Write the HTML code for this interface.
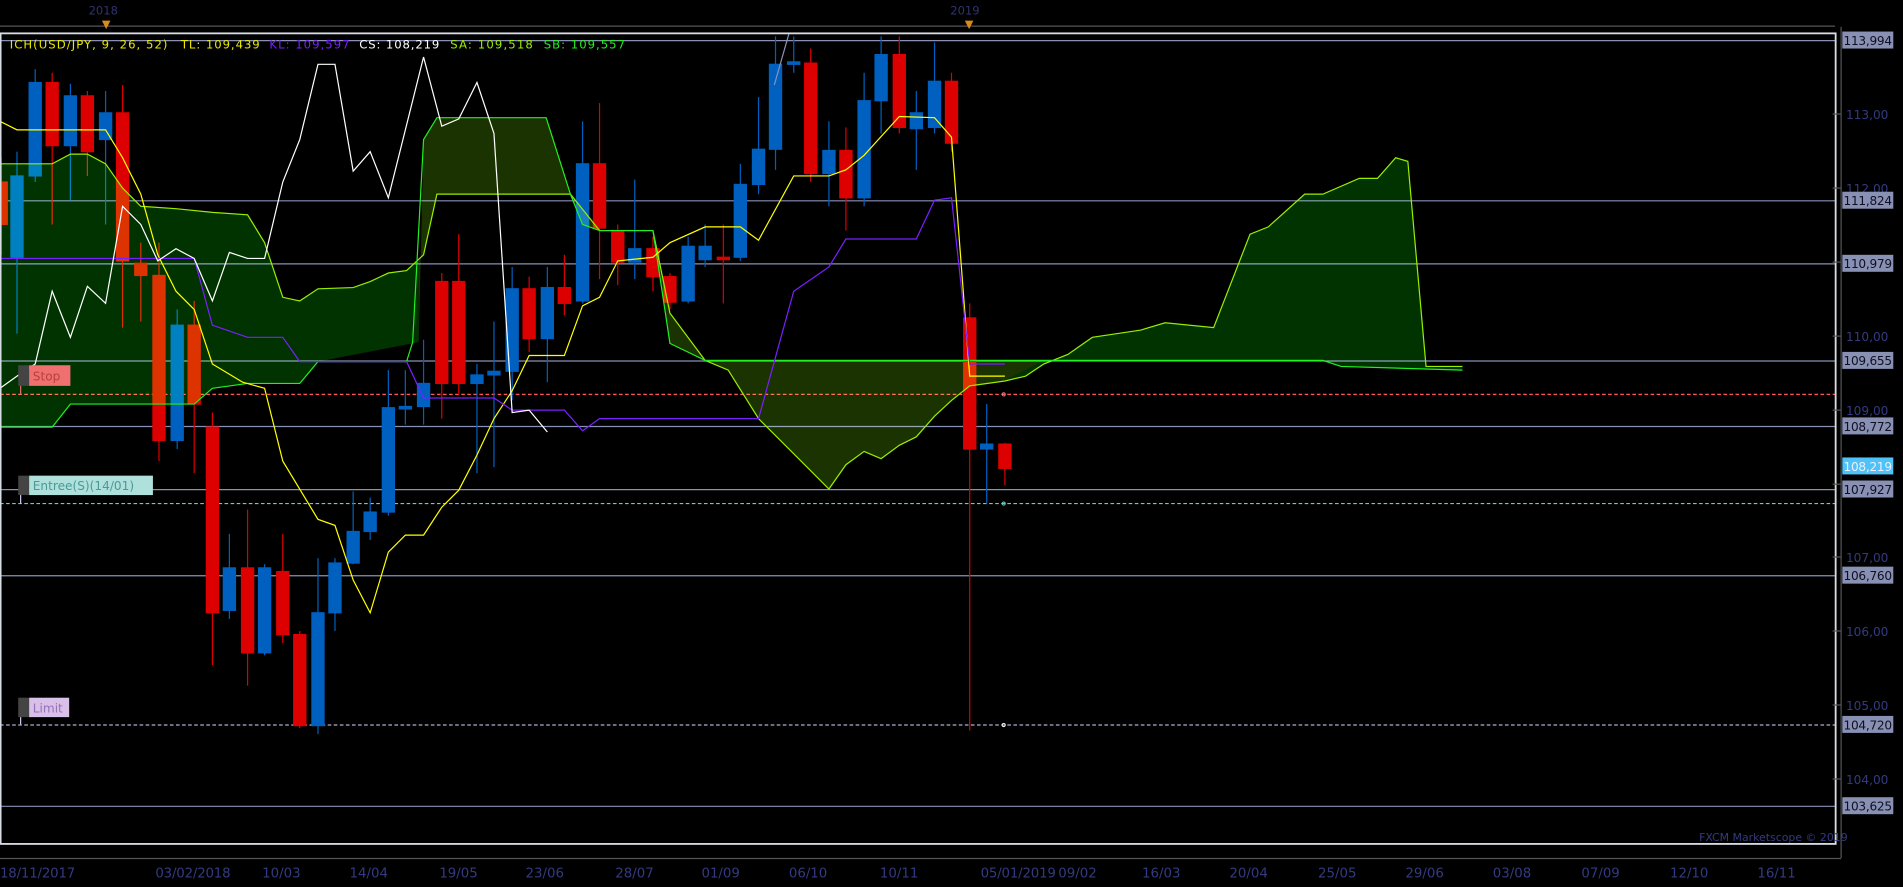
<!DOCTYPE html>
<html><head><meta charset="utf-8"><style>
html,body{margin:0;padding:0;background:#000;overflow:hidden}
svg{display:block}
text{font-family:"DejaVu Sans","Liberation Sans",sans-serif}
</style></head><body>
<svg width="1903" height="887" viewBox="0 0 1568 731" preserveAspectRatio="none" xmlns="http://www.w3.org/2000/svg">
<rect width="1568" height="731" fill="#000"/>
<line x1="0" y1="21.5" x2="1512" y2="21.5" stroke="#555" stroke-width="1"/>
<text x="73" y="12" fill="#2e3370" font-size="9.5">2018</text>
<text x="783" y="12" fill="#2e3370" font-size="9.5">2019</text>
<polygon points="84,17 91,17 87.5,24" fill="#d98a1a"/>
<polygon points="795,17 802,17 798.5,24" fill="#d98a1a"/>

<g stroke="#8890b4" stroke-width="1">
<line x1="0" y1="33.5" x2="1512" y2="33.5"/>
<line x1="0" y1="165.5" x2="1512" y2="165.5"/>
<line x1="0" y1="217.5" x2="1512" y2="217.5"/>
<line x1="0" y1="297.5" x2="1512" y2="297.5"/>
<line x1="0" y1="351.5" x2="1512" y2="351.5"/>
<line x1="0" y1="403.5" x2="1512" y2="403.5"/>
<line x1="0" y1="474.5" x2="1512" y2="474.5"/>
<line x1="0" y1="664.5" x2="1512" y2="664.5"/>
</g>
<line x1="0" y1="597.5" x2="1512" y2="597.5" stroke="#b8a8d0" stroke-width="1" stroke-dasharray="3,2"/>
<line x1="0" y1="325" x2="1512" y2="325" stroke="#ff5555" stroke-width="1" stroke-dasharray="3,2"/>
<line x1="0" y1="415" x2="1512" y2="415" stroke="#66cccc" stroke-width="1" stroke-dasharray="3,2"/>

<g stroke-width="1">
<g fill="#dd0000" stroke="#dd0000">
<line x1="1" y1="130" x2="1" y2="210"/><rect x="-4" y="150" width="10" height="35"/>
<line x1="43" y1="60" x2="43" y2="185"/><rect x="38" y="68" width="10" height="52"/>
<line x1="72" y1="75" x2="72" y2="145"/><rect x="67" y="79" width="10" height="46"/>
<line x1="101" y1="70" x2="101" y2="270"/><rect x="96" y="93" width="10" height="122"/>
<line x1="116" y1="200" x2="116" y2="265"/><rect x="111" y="217" width="10" height="10"/>
<line x1="131" y1="200" x2="131" y2="380"/><rect x="126" y="227" width="10" height="136"/>
<line x1="160" y1="248" x2="160" y2="390"/><rect x="155" y="268" width="10" height="65"/>
<line x1="175" y1="340" x2="175" y2="548"/><rect x="170" y="352" width="10" height="153"/>
<line x1="204" y1="420" x2="204" y2="565"/><rect x="199" y="468" width="10" height="70"/>
<line x1="233" y1="440" x2="233" y2="530"/><rect x="228" y="471" width="10" height="52"/>
<line x1="247" y1="520" x2="247" y2="600"/><rect x="242" y="523" width="10" height="75"/>
<line x1="364" y1="225" x2="364" y2="345"/><rect x="359" y="232" width="10" height="84"/>
<line x1="378" y1="193" x2="378" y2="325"/><rect x="373" y="232" width="10" height="84"/>
<line x1="436" y1="228" x2="436" y2="290"/><rect x="431" y="238" width="10" height="41"/>
<line x1="465" y1="210" x2="465" y2="260"/><rect x="460" y="237" width="10" height="13"/>
<line x1="494" y1="85" x2="494" y2="230"/><rect x="489" y="135" width="10" height="53"/>
<line x1="509" y1="185" x2="509" y2="235"/><rect x="504" y="190" width="10" height="26"/>
<line x1="538" y1="195" x2="538" y2="240"/><rect x="533" y="205" width="10" height="23"/>
<line x1="552" y1="225" x2="552" y2="255"/><rect x="547" y="228" width="10" height="21"/>
<line x1="596" y1="185" x2="596" y2="250"/><rect x="591" y="212" width="10" height="2"/>
<line x1="668" y1="40" x2="668" y2="150"/><rect x="663" y="52" width="10" height="91"/>
<line x1="697" y1="105" x2="697" y2="190"/><rect x="692" y="124" width="10" height="39"/>
<line x1="741" y1="30" x2="741" y2="110"/><rect x="736" y="45" width="10" height="60"/>
<line x1="784" y1="60" x2="784" y2="125"/><rect x="779" y="67" width="10" height="51"/>
<line x1="799" y1="250" x2="799" y2="602"/><rect x="794" y="262" width="10" height="108"/>
<line x1="828" y1="365" x2="828" y2="400"/><rect x="823" y="366" width="10" height="20"/>
</g>
<g fill="#0060c0" stroke="#0060c0">
<line x1="14" y1="125" x2="14" y2="275"/><rect x="9" y="145" width="10" height="67"/>
<line x1="29" y1="57" x2="29" y2="150"/><rect x="24" y="68" width="10" height="77"/>
<line x1="58" y1="69" x2="58" y2="165"/><rect x="53" y="79" width="10" height="41"/>
<line x1="87" y1="75" x2="87" y2="185"/><rect x="82" y="93" width="10" height="22"/>
<line x1="146" y1="255" x2="146" y2="370"/><rect x="141" y="268" width="10" height="95"/>
<line x1="189" y1="440" x2="189" y2="510"/><rect x="184" y="468" width="10" height="35"/>
<line x1="218" y1="465" x2="218" y2="540"/><rect x="213" y="468" width="10" height="70"/>
<line x1="262" y1="460" x2="262" y2="605"/><rect x="257" y="505" width="10" height="93"/>
<line x1="276" y1="460" x2="276" y2="520"/><rect x="271" y="464" width="10" height="41"/>
<line x1="291" y1="405" x2="291" y2="465"/><rect x="286" y="438" width="10" height="26"/>
<line x1="305" y1="410" x2="305" y2="445"/><rect x="300" y="422" width="10" height="16"/>
<line x1="320" y1="305" x2="320" y2="425"/><rect x="315" y="336" width="10" height="86"/>
<line x1="334" y1="305" x2="334" y2="350"/><rect x="329" y="335" width="10" height="2"/>
<line x1="349" y1="280" x2="349" y2="350"/><rect x="344" y="316" width="10" height="19"/>
<line x1="393" y1="300" x2="393" y2="390"/><rect x="388" y="309" width="10" height="7"/>
<line x1="407" y1="265" x2="407" y2="385"/><rect x="402" y="306" width="10" height="3"/>
<line x1="422" y1="220" x2="422" y2="330"/><rect x="417" y="238" width="10" height="68"/>
<line x1="451" y1="220" x2="451" y2="315"/><rect x="446" y="237" width="10" height="42"/>
<line x1="480" y1="100" x2="480" y2="250"/><rect x="475" y="135" width="10" height="113"/>
<line x1="523" y1="148" x2="523" y2="230"/><rect x="518" y="205" width="10" height="11"/>
<line x1="567" y1="195" x2="567" y2="250"/><rect x="562" y="203" width="10" height="45"/>
<line x1="581" y1="185" x2="581" y2="220"/><rect x="576" y="203" width="10" height="11"/>
<line x1="610" y1="135" x2="610" y2="215"/><rect x="605" y="152" width="10" height="60"/>
<line x1="625" y1="80" x2="625" y2="160"/><rect x="620" y="123" width="10" height="29"/>
<line x1="639" y1="30" x2="639" y2="140"/><rect x="634" y="53" width="10" height="70"/>
<line x1="654" y1="30" x2="654" y2="60"/><rect x="649" y="51" width="10" height="2"/>
<line x1="683" y1="100" x2="683" y2="170"/><rect x="678" y="124" width="10" height="19"/>
<line x1="712" y1="60" x2="712" y2="170"/><rect x="707" y="83" width="10" height="80"/>
<line x1="726" y1="30" x2="726" y2="110"/><rect x="721" y="45" width="10" height="38"/>
<line x1="755" y1="75" x2="755" y2="140"/><rect x="750" y="93" width="10" height="13"/>
<line x1="770" y1="35" x2="770" y2="110"/><rect x="765" y="67" width="10" height="38"/>
<line x1="813" y1="333" x2="813" y2="415"/><rect x="808" y="366" width="10" height="4"/>
</g>
</g>

<g style="mix-blend-mode:screen">
<polygon fill="#003300" points="0,135 43,135 58,127 72,127 87,135 101,155 116,170 145,172 175,175 204,177 218,200 233,245 247,248 262,238 291,237 305,232 320,225 335,223 345,215 345,282 262,298 247,316 204,316 175,320 160,333 58,333 43,352 0,352"/>
<polygon fill="#1a3300" points="345,282 349,115 360,97 450,97 470,160 480,185 494,190 538,190 552,283 581,297 600,297 600,305 581,297 552,258 538,190 494,190 470,160 378,160 360,160 349,210 345,215"/>
<polygon fill="#1a3300" points="581,297 600,305 625,345 640,360 660,380 683,403 697,383 712,372 726,378 741,367 755,360 770,343 784,330 799,318 828,314 860,297"/>
<polygon fill="#003300" points="828,314 845,310 860,300 880,292 900,278 940,272 960,266 1000,270 1030,193 1045,187 1075,160 1090,160 1120,147 1135,147 1150,130 1160,133 1175,302 1205,302 1205,305 1105,302 1090,297 860,297"/>
</g>

<g fill="none" stroke-width="1">
<polyline stroke="#99ee00" points="0,135 43,135 58,127 72,127 87,135 101,155 116,170 145,172 175,175 204,177 218,200 233,245 247,248 262,238 291,237 305,232 320,225 335,223 349,210 360,160 470,160 494,190 538,190 552,258 581,297 600,305 625,345 640,360 660,380 683,403 697,383 712,372 726,378 741,367 755,360 770,343 784,330 799,318 828,314 845,310 860,300 880,292 900,278 940,272 960,266 1000,270 1030,193 1045,187 1075,160 1090,160 1120,147 1135,147 1150,130 1160,133 1175,302 1205,302"/>
<polyline stroke="#22ee22" points="0,352 43,352 58,333 160,333 175,320 204,316 247,316 262,298 335,298 340,282 349,115 360,97 450,97 470,160 480,185 494,190 538,190 552,283 581,297 1090,297 1105,302 1205,305"/>
<polyline stroke="#ffff00" points="0,100 14,107 87,107 101,130 116,160 130,210 145,240 160,255 175,300 200,315 218,320 233,380 262,428 276,433 291,478 305,505 320,455 334,441 349,441 364,418 378,404 393,375 407,345 422,322 436,293 465,293 480,252 494,245 509,215 538,212 552,200 581,187 610,187 625,198 654,145 683,145 697,140 712,128 741,96 770,97 784,113 799,310 828,310"/>
<polyline stroke="#7a1fff" points="0,213 160,213 175,268 204,278 233,278 247,298 335,298 349,328 407,328 422,338 465,338 480,355 494,345 625,345 654,240 683,220 697,197 755,197 770,165 784,163 799,300 828,300"/>
<polyline stroke="#ffffff" points="0,320 14,310 29,300 43,240 58,278 72,236 87,250 101,170 116,185 130,215 145,205 160,213 175,248 189,208 204,213 218,213 233,150 247,115 262,53 276,53 291,141 305,125 320,163 349,47 364,104 378,98 393,68 407,110 422,340 436,338 451,356"/>
<polyline stroke="#8890b4" points="638,70 650,28"/>
</g>

<g font-size="10">
<rect x="15" y="301" width="9" height="17" fill="#444"/><rect x="24" y="301" width="34" height="17" fill="#f07070"/>
<text x="27" y="313.5" fill="#b84040">Stop</text>
<path d="M17,318 V325" stroke="#e07070" fill="none"/>
<rect x="15" y="392" width="9" height="16" fill="#444"/><rect x="24" y="392" width="102" height="16" fill="#b0e0dc"/>
<text x="27" y="404" fill="#4a9a9a">Entree(S)(14/01)</text>
<path d="M17,408 V415" stroke="#cce" fill="none"/>
<rect x="15" y="575" width="9" height="16" fill="#444"/><rect x="24" y="575" width="33" height="16" fill="#d8c0e8"/>
<text x="27" y="587" fill="#9a70b8">Limit</text>
<path d="M17,591 V597" stroke="#cce" fill="none"/>
</g>
<g fill="none" stroke="#fff" stroke-width="0.8"><circle cx="827" cy="325" r="1.3" stroke="#f77"/><circle cx="827" cy="415" r="1.3" stroke="#7cc"/><circle cx="827" cy="597.5" r="1.3"/></g>

<g font-size="9.6">
<text x="8" y="40" fill="#e8e800" textLength="130">ICH(USD/JPY, 9, 26, 52)</text>
<text x="149" y="40" fill="#e8e800" textLength="65">TL: 109,439</text>
<text x="222" y="40" fill="#7a1fff" textLength="66">KL: 109,597</text>
<text x="296" y="40" fill="#ffffff" textLength="66">CS: 108,219</text>
<text x="371" y="40" fill="#99ee00" textLength="68">SA: 109,518</text>
<text x="448" y="40" fill="#22ee22" textLength="67">SB: 109,557</text>
</g>

<rect x="0.5" y="27.5" width="1512" height="668" fill="none" stroke="#d8dce4" stroke-width="1.5"/>
<text x="1400" y="693" fill="#333a80" font-size="9">FXCM Marketscope © 2019</text>

<line x1="1517" y1="22" x2="1517" y2="707" stroke="#555"/>
<g stroke="#555">
<line x1="1510" y1="94" x2="1517" y2="94"/><line x1="1510" y1="155" x2="1517" y2="155"/><line x1="1510" y1="216" x2="1517" y2="216"/><line x1="1510" y1="277" x2="1517" y2="277"/><line x1="1510" y1="338" x2="1517" y2="338"/><line x1="1510" y1="399" x2="1517" y2="399"/><line x1="1510" y1="459" x2="1517" y2="459"/><line x1="1510" y1="520" x2="1517" y2="520"/><line x1="1510" y1="581" x2="1517" y2="581"/><line x1="1510" y1="642" x2="1517" y2="642"/>
</g>
<g font-size="10" fill="#333a80">
<text x="1521" y="98">113,00</text>
<text x="1521" y="159">112,00</text>
<text x="1521" y="281">110,00</text>
<text x="1521" y="342">109,00</text>
<text x="1521" y="463">107,00</text>
<text x="1521" y="524">106,00</text>
<text x="1521" y="585">105,00</text>
<text x="1521" y="646">104,00</text>
</g>
<g font-size="10">
<rect x="1518" y="26" width="42" height="14" fill="#8890b4"/><text x="1519" y="37" fill="#101020" textLength="40">113,994</text>
<rect x="1518" y="158" width="42" height="14" fill="#8890b4"/><text x="1519" y="169" fill="#101020" textLength="40">111,824</text>
<rect x="1518" y="210" width="42" height="14" fill="#8890b4"/><text x="1519" y="221" fill="#101020" textLength="40">110,979</text>
<rect x="1518" y="290" width="42" height="14" fill="#8890b4"/><text x="1519" y="301" fill="#101020" textLength="40">109,655</text>
<rect x="1518" y="344" width="42" height="14" fill="#8890b4"/><text x="1519" y="355" fill="#101020" textLength="40">108,772</text>
<rect x="1518" y="377" width="42" height="14" fill="#4fc3f7"/><text x="1519" y="388" fill="#eef" textLength="40">108,219</text>
<rect x="1518" y="396" width="42" height="14" fill="#8890b4"/><text x="1519" y="407" fill="#101020" textLength="40">107,927</text>
<rect x="1518" y="467" width="42" height="14" fill="#8890b4"/><text x="1519" y="478" fill="#101020" textLength="40">106,760</text>
<rect x="1518" y="590" width="42" height="14" fill="#8890b4"/><text x="1519" y="601" fill="#101020" textLength="40">104,720</text>
<rect x="1518" y="657" width="42" height="14" fill="#8890b4"/><text x="1519" y="668" fill="#101020" textLength="40">103,625</text>
</g>

<line x1="0" y1="707.5" x2="1517" y2="707.5" stroke="#555"/>
<g font-size="11" fill="#333a80" style="font-family:'Liberation Sans',sans-serif">
<text x="0" y="723" textLength="62">18/11/2017</text><text x="128" y="723" textLength="62">03/02/2018</text><text x="216" y="723">10/03</text><text x="288" y="723">14/04</text><text x="362" y="723">19/05</text><text x="433" y="723">23/06</text><text x="507" y="723">28/07</text><text x="578" y="723">01/09</text><text x="650" y="723">06/10</text><text x="725" y="723">10/11</text><text x="808" y="723" textLength="62">05/01/2019</text><text x="872" y="723">09/02</text><text x="941" y="723">16/03</text><text x="1013" y="723">20/04</text><text x="1086" y="723">25/05</text><text x="1158" y="723">29/06</text><text x="1230" y="723">03/08</text><text x="1303" y="723">07/09</text><text x="1376" y="723">12/10</text><text x="1448" y="723">16/11</text>
</g>
</svg>
</body></html>
